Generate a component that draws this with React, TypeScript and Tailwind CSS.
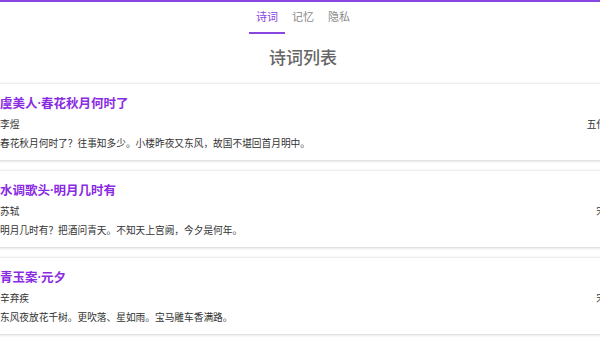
const poems = [
  {
    title: "虞美人·春花秋月何时了",
    author: "李煜",
    dynasty: "五代",
    excerpt: "春花秋月何时了？往事知多少。小楼昨夜又东风，故国不堪回首月明中。",
  },
  {
    title: "水调歌头·明月几时有",
    author: "苏轼",
    dynasty: "宋",
    excerpt: "明月几时有？把酒问青天。不知天上宫阙，今夕是何年。",
  },
  {
    title: "青玉案·元夕",
    author: "辛弃疾",
    dynasty: "宋",
    excerpt: "东风夜放花千树。更吹落、星如雨。宝马雕车香满路。",
  },
];

const tabs = ["诗词", "记忆", "隐私"];

export default function App() {
  return (
    <div
      className="w-[600px] h-[339px] overflow-hidden bg-white border-t-2 border-[#8a46e0]"
      style={{ fontFamily: '"Noto Sans", "Noto Sans CJK SC", sans-serif' }}
    >
      <div className="w-[630px] -ml-[12px] flex flex-col items-center">
        <div className="flex h-[32px] items-stretch">
          {tabs.map((t, i) => (
            <div
              key={t}
              className={
                "w-[36px] flex items-center justify-center text-[11px] border-b-2 " +
                (i === 0
                  ? "text-[#8a3ee6] border-[#8a46e0]"
                  : "text-[#8a8a8a] border-transparent")
              }
            >
              {t}
            </div>
          ))}
        </div>
        <h1 className="mt-[12px] text-[17px] leading-[24px] text-[#666] font-medium">
          诗词列表
        </h1>
        <div className="mt-[13px] w-full flex flex-col gap-[10px]">
          {poems.map((p) => (
            <div
              key={p.title}
              className="bg-white rounded-[3px] border-t border-[#eeeeee] shadow-[0_1px_3px_rgba(0,0,0,0.18)] px-[12px] pt-[10px] pb-[9px]"
            >
              <div className="text-[12.5px] leading-5 font-semibold text-[#8a2be2]">
                {p.title}
              </div>
              <div className="mt-[3px] flex justify-between text-[9.7px] leading-[15px] text-[#333]">
                <span>{p.author}</span>
                <span>{p.dynasty}</span>
              </div>
              <div className="mt-[4px] text-[9.7px] leading-[15px] text-[#333]">
                {p.excerpt}
              </div>
            </div>
          ))}
        </div>
      </div>
    </div>
  );
}
